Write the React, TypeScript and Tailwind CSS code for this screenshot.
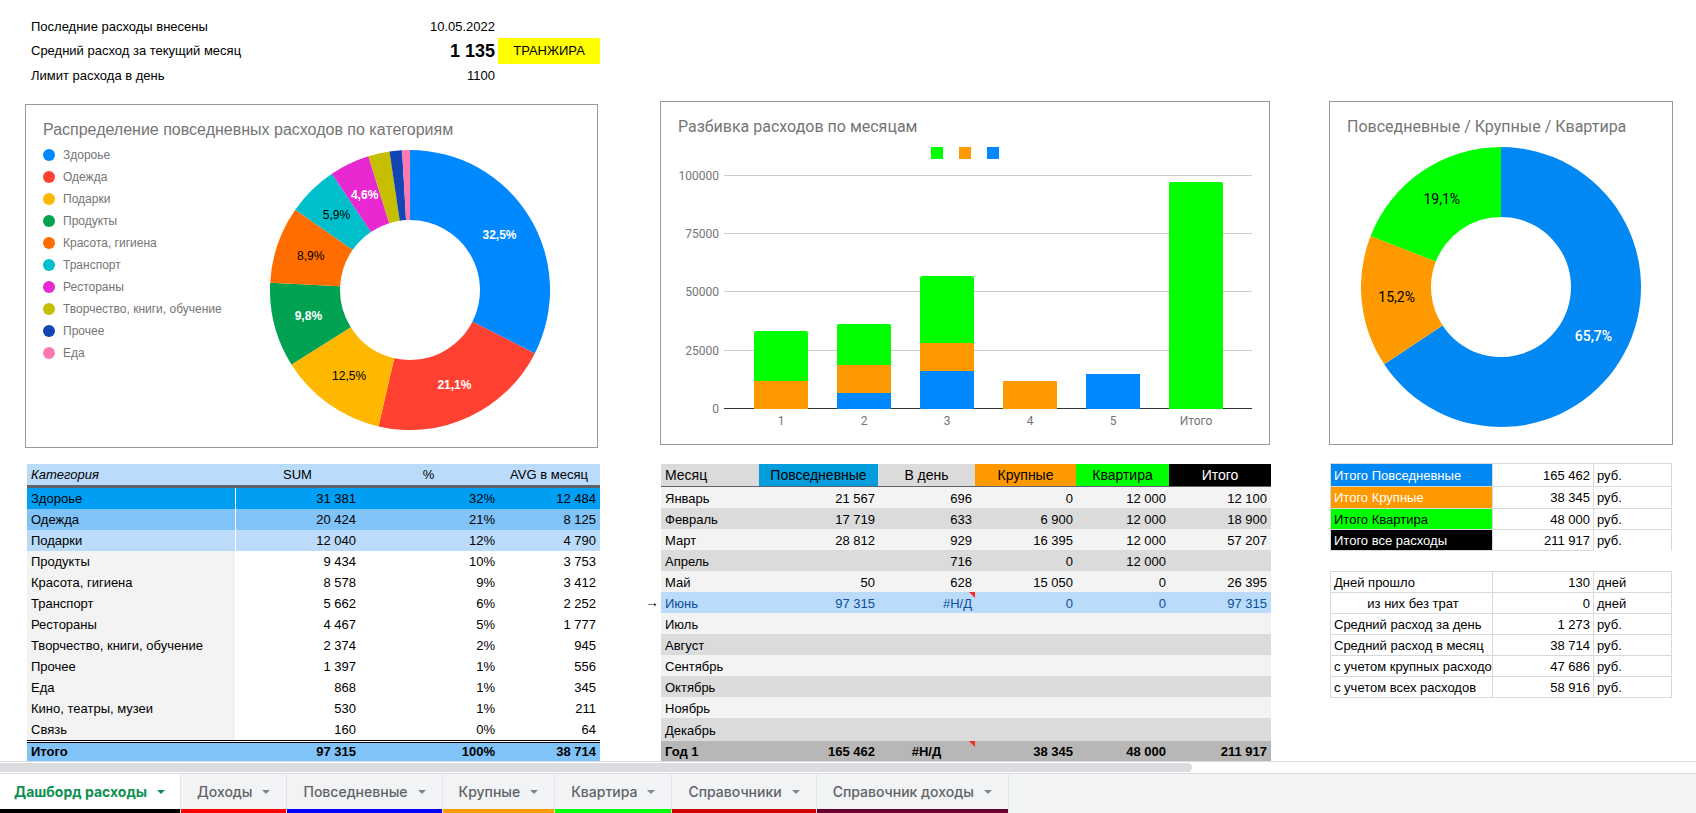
import { Fragment } from "react";
import type { ReactNode } from "react";

type Slice = { label: string; value: number; color: string; text?: "light" | "dark" };

const slices: Slice[] = [
  { label: "Здороье", value: 31381, color: "#0088ff", text: "light" },
  { label: "Одежда", value: 20424, color: "#ff4131", text: "light" },
  { label: "Подарки", value: 12040, color: "#ffb700", text: "dark" },
  { label: "Продукты", value: 9434, color: "#00a150", text: "light" },
  { label: "Красота, гигиена", value: 8578, color: "#ff6d00", text: "dark" },
  { label: "Транспорт", value: 5662, color: "#00bfcd", text: "dark" },
  { label: "Рестораны", value: 4467, color: "#e828d0", text: "light" },
  { label: "Творчество, книги, обучение", value: 2374, color: "#c6be00" },
  { label: "Прочее", value: 1397, color: "#1445b4" },
  { label: "Еда", value: 868, color: "#ff78b0" },
];

const totals: Slice[] = [
  { label: "Повседневные", value: 165462, color: "#0288f2", text: "light" },
  { label: "Крупные", value: 38345, color: "#ff9900", text: "dark" },
  { label: "Квартира", value: 48000, color: "#00ff00", text: "dark" },
];

function Donut({
  data,
  name,
  textClass,
  lightClass,
}: {
  data: Slice[];
  name: string;
  textClass: string;
  lightClass: string;
}) {
  const sum = data.reduce((a, d) => a + d.value, 0);
  let acc = 0;
  const at = (r: number, t: number) => [140 + r * Math.sin(t), 140 - r * Math.cos(t)];
  return (
    <svg viewBox="0 0 280 280" className="h-[280px] w-[280px] shrink-0" role="img" aria-label={name}>
      {data.map((d) => {
        const a = (acc / sum) * Math.PI * 2;
        acc += d.value;
        const b = (acc / sum) * Math.PI * 2;
        const big = b - a > Math.PI ? 1 : 0;
        const [x1, y1] = at(140, a);
        const [x2, y2] = at(140, b);
        const [x3, y3] = at(70, b);
        const [x4, y4] = at(70, a);
        const [tx, ty] = at(105, (a + b) / 2);
        return (
          <g key={d.label}>
            <path
              d={`M${x1} ${y1}A140 140 0 ${big} 1 ${x2} ${y2}L${x3} ${y3}A70 70 0 ${big} 0 ${x4} ${y4}Z`}
              fill={d.color}
            />
            {d.text && (
              <text
                x={tx}
                y={ty + 4}
                textAnchor="middle"
                className={`${textClass} ${d.text === "light" ? lightClass : "fill-black"}`}
              >
                {((d.value / sum) * 100).toFixed(1).replace(".", ",")}%
              </text>
            )}
          </g>
        );
      })}
    </svg>
  );
}

const bars = [
  { label: "1", blue: 0, orange: 12000, green: 21567 },
  { label: "2", blue: 6900, orange: 12000, green: 17719 },
  { label: "3", blue: 16395, orange: 12000, green: 28812 },
  { label: "4", blue: 0, orange: 12000, green: 0 },
  { label: "5", blue: 15050, orange: 0, green: 0 },
  { label: "Итого", blue: 0, orange: 0, green: 97315 },
];

function BarChart() {
  const base = 250;
  const px = (v: number) => Math.round((v / 100000) * 233);
  return (
    <svg viewBox="0 0 608 284" className="h-[284px] w-full" role="img" aria-label="Разбивка расходов по месяцам">
      {[100000, 75000, 50000, 25000, 0].map((v) => (
        <g key={v}>
          <rect x="63" y={base - 1 - px(v)} width="528" height="1" fill={v ? "#cccccc" : "#333333"} />
          <text x="58" y={base + 4 - px(v)} textAnchor="end" className="fill-[#757575] text-[12px]">
            {v}
          </text>
        </g>
      ))}
      {bars.map((b, i) => {
        const x = 93 + i * 83;
        const hb = px(b.blue);
        const ho = px(b.orange);
        const hg = px(b.green);
        const top = base - hb - ho - hg;
        return (
          <g key={b.label}>
            {hb > 0 && <rect x={x} y={base - hb} width="54" height={hb} fill="#0088ff" />}
            {ho > 0 && <rect x={x} y={base - hb - ho} width="54" height={ho} fill="#ff9900" />}
            {hg > 0 && (
              <path
                d={`M${x} ${top + hg}V${top + 2}Q${x} ${top} ${x + 2} ${top}H${x + 52}Q${x + 54} ${top} ${x + 54} ${top + 2}V${top + hg}Z`}
                fill="#00ff00"
              />
            )}
            <text x={x + 27} y={266} textAnchor="middle" className="fill-[#757575] text-[12px]">
              {b.label}
            </text>
          </g>
        );
      })}
    </svg>
  );
}

function ChartCard({ title, className, children }: { title: string; className: string; children: ReactNode }) {
  return (
    <section className={`h-[344px] border border-[#999999] bg-white ${className}`}>
      <h2 className="pt-3.5 pl-[17px] text-[16px] leading-[22px] whitespace-nowrap text-[#757575]">{title}</h2>
      {children}
    </section>
  );
}

const categories: [string, string, string, string, string, string][] = [
  ["Здороье", "31 381", "32%", "12 484", "bg-[#009ff4]", "bg-[#009ff4]"],
  ["Одежда", "20 424", "21%", "8 125", "bg-[#80c3f9]", "bg-[#80c3f9]"],
  ["Подарки", "12 040", "12%", "4 790", "bg-[#badbfa]", "bg-[#badbfa]"],
  ["Продукты", "9 434", "10%", "3 753", "", "bg-[#f3f3f3]"],
  ["Красота, гигиена", "8 578", "9%", "3 412", "", "bg-[#f3f3f3]"],
  ["Транспорт", "5 662", "6%", "2 252", "", "bg-[#f3f3f3]"],
  ["Рестораны", "4 467", "5%", "1 777", "", "bg-[#f3f3f3]"],
  ["Творчество, книги, обучение", "2 374", "2%", "945", "", "bg-[#f3f3f3]"],
  ["Прочее", "1 397", "1%", "556", "", "bg-[#f3f3f3]"],
  ["Еда", "868", "1%", "345", "", "bg-[#f3f3f3]"],
  ["Кино, театры, музеи", "530", "1%", "211", "", "bg-[#f3f3f3]"],
  ["Связь", "160", "0%", "64", "", "bg-[#f3f3f3]"],
];

function CategoryTable() {
  const totalCell = "border-t-3 border-double border-black bg-[#80c3f9] bg-clip-padding p-0";
  return (
    <table className="w-full table-fixed border-separate border-spacing-0 text-[13px] leading-[16px]">
      <colgroup>
        <col className="w-[209px]" />
        <col className="w-[123px]" />
        <col className="w-[139px]" />
        <col className="w-[102px]" />
      </colgroup>
      <thead>
        <tr className="h-6 bg-[#badbfa]">
          <th className="border-b-3 border-[#5f6368] p-0 pl-1 text-left font-normal italic">Категория</th>
          <th className="border-b-3 border-[#5f6368] p-0 font-normal">SUM</th>
          <th className="border-b-3 border-[#5f6368] p-0 font-normal">%</th>
          <th className="border-b-3 border-[#5f6368] p-0 font-normal">AVG в месяц</th>
        </tr>
      </thead>
      <tbody>
        {categories.map(([name, sum, pct, avg, row, head]) => (
          <tr key={name} className={`h-[21px] ${row}`}>
            <th scope="row" className={`border-r border-white p-0 pl-1 text-left font-normal ${head}`}>
              {name}
            </th>
            <td className="p-0 pr-[3px] text-right">{sum}</td>
            <td className="p-0 pr-[3px] text-right">{pct}</td>
            <td className="p-0 pr-1 text-right">{avg}</td>
          </tr>
        ))}
      </tbody>
      <tfoot>
        <tr className="h-[21px] font-bold">
          <th scope="row" className={`${totalCell} pl-1 text-left`}>
            Итого
          </th>
          <td className={`${totalCell} pr-[3px] text-right`}>97 315</td>
          <td className={`${totalCell} pr-[3px] text-right`}>100%</td>
          <td className={`${totalCell} pr-1 text-right`}>38 714</td>
        </tr>
      </tfoot>
    </table>
  );
}

const months: string[][] = [
  ["Январь", "21 567", "696", "0", "12 000", "12 100"],
  ["Февраль", "17 719", "633", "6 900", "12 000", "18 900"],
  ["Март", "28 812", "929", "16 395", "12 000", "57 207"],
  ["Апрель", "", "716", "0", "12 000", ""],
  ["Май", "50", "628", "15 050", "0", "26 395"],
  ["Июнь", "97 315", "#Н/Д", "0", "0", "97 315"],
  ["Июль", "", "", "", "", ""],
  ["Август", "", "", "", "", ""],
  ["Сентябрь", "", "", "", "", ""],
  ["Октябрь", "", "", "", "", ""],
  ["Ноябрь", "", "", "", "", ""],
  ["Декабрь", "", "", "", "", ""],
];

function ErrorMark() {
  return (
    <svg viewBox="0 0 6 6" className="absolute top-0 right-0 h-1.5 w-1.5" aria-hidden="true">
      <path d="M0 0H6V6Z" fill="#ff2a1a" />
    </svg>
  );
}

function MonthTable() {
  return (
    <table className="w-full table-fixed border-separate border-spacing-0 text-[13px] leading-[16px]">
      <colgroup>
        <col className="w-[98px]" />
        <col className="w-[119px]" />
        <col className="w-[97px]" />
        <col className="w-[101px]" />
        <col className="w-[93px]" />
        <col className="w-[102px]" />
      </colgroup>
      <thead>
        <tr className="h-[23px] text-[14px]">
          <th className="border-b border-[#5f6368] bg-[#dbdbdb] p-0 pl-1 text-left font-normal">Месяц</th>
          <th className="border-b border-[#5f6368] bg-[#039ddd] p-0 font-normal">Повседневные</th>
          <th className="border-b border-[#5f6368] bg-[#dbdbdb] p-0 font-normal">В день</th>
          <th className="border-b border-[#5f6368] bg-[#ff9900] p-0 font-normal">Крупные</th>
          <th className="border-b border-[#5f6368] bg-[#00ff00] p-0 font-normal">Квартира</th>
          <th className="border-b border-[#5f6368] bg-black p-0 font-normal text-white">Итого</th>
        </tr>
      </thead>
      <tbody>
        {months.map(([name, ...cells], i) => {
          const current = name === "Июнь";
          const tone = current ? "bg-[#badbfa] text-[#0b4f9c]" : i % 2 ? "bg-[#dbdbdb]" : "bg-[#f3f3f3]";
          return (
            <tr key={name} className={`${i === 11 ? "h-[23px]" : "h-[21px]"} ${tone}`}>
              <th scope="row" className="relative p-0 pt-0.5 pl-1 text-left font-normal">
                {current && <span className="absolute top-0.5 right-full mr-0.5 text-[14px] font-bold text-black">→</span>}
                {name}
              </th>
              {cells.map((c, j) => (
                <td key={j} className="relative p-0 pt-0.5 pr-[3px] text-right last:pr-1">
                  {c}
                  {c.startsWith("#") && <ErrorMark />}
                </td>
              ))}
            </tr>
          );
        })}
      </tbody>
      <tfoot>
        <tr className="h-5 bg-[#b7b7b7] font-bold">
          <th scope="row" className="p-0 pt-0.5 pl-1 text-left">
            Год 1
          </th>
          <td className="p-0 pt-0.5 pr-[3px] text-right">165 462</td>
          <td className="relative p-0 pt-0.5 text-center">
            #Н/Д
            <ErrorMark />
          </td>
          <td className="p-0 pt-0.5 pr-[3px] text-right">38 345</td>
          <td className="p-0 pt-0.5 pr-[3px] text-right">48 000</td>
          <td className="p-0 pt-0.5 pr-1 text-right">211 917</td>
        </tr>
      </tfoot>
    </table>
  );
}

type SideRow = { name: string; value: string; unit: string; head: string; h: string; open?: boolean };

const sums: SideRow[] = [
  { name: "Итого Повседневные", value: "165 462", unit: "руб.", head: "text-left bg-[#0288f2] text-white", h: "h-[23px]" },
  { name: "Итого Крупные", value: "38 345", unit: "руб.", head: "text-left bg-[#ff9900] text-white", h: "h-[22px]" },
  { name: "Итого Квартира", value: "48 000", unit: "руб.", head: "text-left bg-[#00ff00]", h: "h-[21px]" },
  { name: "Итого все расходы", value: "211 917", unit: "руб.", head: "text-left bg-black text-white", h: "h-[21px]", open: true },
];

const stats: SideRow[] = [
  { name: "Дней прошло", value: "130", unit: "дней", head: "text-left", h: "h-[21px]" },
  { name: "из них без трат", value: "0", unit: "дней", head: "text-center", h: "h-[21px]" },
  { name: "Средний расход за день", value: "1 273", unit: "руб.", head: "text-left", h: "h-[21px]" },
  { name: "Средний расход в месяц", value: "38 714", unit: "руб.", head: "text-left", h: "h-[21px]" },
  { name: "с учетом крупных расходов", value: "47 686", unit: "руб.", head: "text-left", h: "h-[21px]" },
  { name: "с учетом всех расходов", value: "58 916", unit: "руб.", head: "text-left", h: "h-[21px]" },
];

function SideTable({ rows }: { rows: SideRow[] }) {
  return (
    <table className="w-full table-fixed border-separate border-spacing-0 border-t border-l border-[#d9d9d9] text-[13px] leading-[16px]">
      <colgroup>
        <col className="w-[162px]" />
        <col className="w-[101px]" />
        <col className="w-[78px]" />
      </colgroup>
      <tbody>
        {rows.map((r) => (
          <tr key={r.name} className={r.h}>
            <th
              scope="row"
              className={`overflow-hidden border-r border-b border-[#d9d9d9] p-0 pt-px pl-[3px] font-normal whitespace-nowrap ${r.head}`}
            >
              {r.name}
            </th>
            <td className="border-r border-b border-[#d9d9d9] p-0 pt-px pr-[3px] text-right">{r.value}</td>
            <td className={`border-r border-[#d9d9d9] p-0 pt-px pl-[3px] ${r.open ? "" : "border-b"}`}>{r.unit}</td>
          </tr>
        ))}
      </tbody>
    </table>
  );
}

const tabs = [
  { name: "Дашборд расходы", strip: "border-black" },
  { name: "Доходы", strip: "border-[#ff0000]" },
  { name: "Повседневные", strip: "border-[#0000ff]" },
  { name: "Крупные", strip: "border-[#ff9900]" },
  { name: "Квартира", strip: "border-[#00ff00]" },
  { name: "Справочники", strip: "border-[#cc0000]" },
  { name: "Справочник доходы", strip: "border-[#660033]" },
];

const info = [
  { name: "Последние расходы внесены", value: "10.05.2022", tag: "" },
  { name: "Средний расход за текущий месяц", value: "1 135", tag: "ТРАНЖИРА" },
  { name: "Лимит расхода в день", value: "1100", tag: "" },
];

export default function App() {
  return (
    <div className="flex min-h-screen flex-col bg-white font-['Liberation_Sans',Arial,sans-serif] text-black">
      <main>
        <div className="grid h-[101px] grid-cols-[573fr_61fr_610fr_59fr_342fr] pt-4 pr-6 pl-[27px]">
          <dl className="grid h-[72px] grid-cols-[332fr_139fr_102fr] grid-rows-[22px_26px_24px] items-center text-[13px]">
            {info.map((r) => (
              <Fragment key={r.name}>
                <dt className="pl-1 whitespace-nowrap">{r.name}</dt>
                <dd className={`pr-[3px] text-right ${r.tag ? "text-[18px] leading-6 font-bold" : ""}`}>{r.value}</dd>
                <dd className={`h-full content-center text-center ${r.tag ? "bg-[#ffff00]" : ""}`}>{r.tag}</dd>
              </Fragment>
            ))}
          </dl>
        </div>

        <div className="grid grid-cols-[573fr_62fr_610fr_59fr_344fr] pr-[23px] pl-[25px]">
          <ChartCard title="Распределение повседневных расходов по категориям" className="col-start-1 mt-[3px]">
            <div className="flex items-start justify-between pr-[47px] pl-[17px]">
              <ul className="pt-[3px] text-[12px] leading-[22px] text-[#757575]">
                {slices.map((s) => (
                  <li key={s.label} className="flex items-center gap-2">
                    <svg viewBox="0 0 12 12" className="h-3 w-3" aria-hidden="true">
                      <circle cx="6" cy="6" r="6" fill={s.color} />
                    </svg>
                    {s.label}
                  </li>
                ))}
              </ul>
              <div className="pt-[9px]">
                <Donut
                  data={slices}
                  name="Распределение по категориям"
                  textClass="text-[12px]"
                  lightClass="fill-white font-bold"
                />
              </div>
            </div>
          </ChartCard>
          <ChartCard title="Разбивка расходов по месяцам" className="col-start-3 mb-[3px] font-[Roboto,sans-serif]">
            <div className="flex justify-center gap-4 pt-[9px]">
              <span className="h-3 w-3 bg-[#00ff00]" />
              <span className="h-3 w-3 bg-[#ff9900]" />
              <span className="h-3 w-3 bg-[#0088ff]" />
            </div>
            <BarChart />
          </ChartCard>
          <ChartCard title="Повседневные / Крупные / Квартира" className="col-start-5 font-[Roboto,sans-serif]">
            <div className="flex justify-center pt-[9px]">
              <Donut
                data={totals}
                name="Повседневные / Крупные / Квартира"
                textClass="text-[14px]"
                lightClass="fill-white font-medium"
              />
            </div>
          </ChartCard>
        </div>

        <div className="mt-[15px] grid grid-cols-[573fr_61fr_610fr_59fr_342fr] items-start pr-6 pl-[27px]">
          <div className="col-start-1 pt-px">
            <CategoryTable />
          </div>
          <div className="col-start-3 pt-px">
            <MonthTable />
          </div>
          <div className="col-start-5 flex flex-col gap-5">
            <SideTable rows={sums} />
            <SideTable rows={stats} />
          </div>
        </div>
      </main>

      <footer className="mt-auto">
        <div className="h-[13px] border-y border-[#dadce0] bg-white py-px">
          <div className="h-full w-[70.3%] rounded-r-full rounded-l-md bg-[#dadce0]" />
        </div>
        <nav className="flex bg-[#f1f3f4] font-[Inter,sans-serif]">
          <div className="flex gap-px bg-[#e2e5e8] pr-px">
            {tabs.map((t, i) => (
              <button
                key={t.name}
                type="button"
                className={`flex h-[39px] items-center gap-2.5 border-b-4 text-[14px] whitespace-nowrap ${t.strip} ${
                  i === 0
                    ? "bg-white pr-[15px] pl-3.5 font-bold text-[#0d904f]"
                    : "bg-[#f1f3f4] px-4 font-medium text-[#5f6368]"
                }`}
              >
                {t.name}
                <svg viewBox="0 0 8 4" className="h-1 w-2" aria-hidden="true">
                  <path d="M0 0H8L4 4Z" fill={i === 0 ? "#0d904f" : "#80868b"} />
                </svg>
              </button>
            ))}
          </div>
        </nav>
      </footer>
    </div>
  );
}
